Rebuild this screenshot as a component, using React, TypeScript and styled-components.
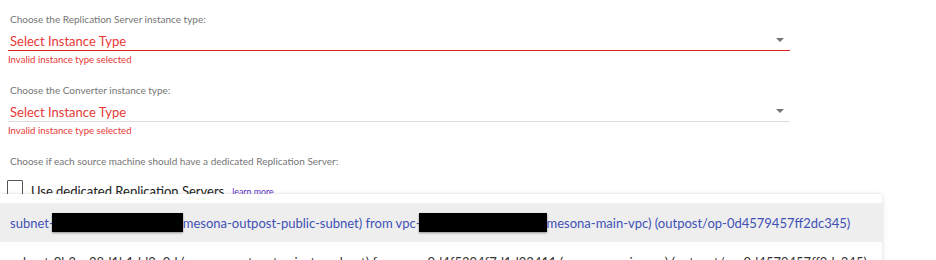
import React from 'react';
import styled, { createGlobalStyle } from 'styled-components';

const GlobalStyle = createGlobalStyle`
  html, body {
    margin: 0;
    padding: 0;
    overflow: hidden;
    background: #ffffff;
    font-family: Lato, 'Open Sans', sans-serif;
  }
`;

type Option = { subnet: string; name: string; vpc: string; outpost: string; redacted?: boolean };

const options: Option[] = [
  { subnet: '', name: 'mesona-outpost-public-subnet', vpc: '', outpost: 'op-0d4579457ff2dc345', redacted: true },
  { subnet: '0b2ce28d1b1dd2e0d', name: 'mesona-outpost-private-subnet', vpc: '0d4f5304f7d1d23411', outpost: 'op-0d4579457ff2dc345' },
  { subnet: '07a1c9e3b52d4f6a8', name: 'mesona-outpost-app-subnet', vpc: '0d4f5304f7d1d23411', outpost: 'op-0d4579457ff2dc345' },
  { subnet: '0e93b7a2c4d18f057', name: 'mesona-outpost-db-subnet', vpc: '0d4f5304f7d1d23411', outpost: 'op-0d4579457ff2dc345' },
  { subnet: '0f5d2b8a93c7e1046', name: 'mesona-outpost-mgmt-subnet', vpc: '0d4f5304f7d1d23411', outpost: 'op-0d4579457ff2dc345' },
];

export default function App() {
  return (
    <Page>
      <GlobalStyle />
      <Form>
        <Field>
          <Label>Choose the Replication Server instance type:</Label>
          <SelectBox $error>
            <SelectValue>Select Instance Type</SelectValue>
            <Arrow />
          </SelectBox>
          <ErrorText>Invalid instance type selected</ErrorText>
        </Field>
        <Field>
          <Label>Choose the Converter instance type:</Label>
          <SelectBox>
            <SelectValue>Select Instance Type</SelectValue>
            <Arrow />
          </SelectBox>
          <ErrorText>Invalid instance type selected</ErrorText>
        </Field>
        <Label>Choose if each source machine should have a dedicated Replication Server:</Label>
        <CheckRow>
          <CheckBox />
          <CheckText>Use dedicated Replication Servers</CheckText>
          <LearnMore>learn more</LearnMore>
        </CheckRow>
      </Form>

      <Menu>
        {options.map((o, i) =>
          o.redacted ? (
            <MenuItem key={i} $active={i === 0}>
              subnet-<Redact $w={131} />
              {o.name}) from vpc-<Redact $w={128} />
              mesona-main-vpc) (outpost/{o.outpost})
            </MenuItem>
          ) : (
            <MenuItem key={i}>
              subnet-{o.subnet} ({o.name}) from vpc-{o.vpc} (mesona-main-vpc) (outpost/{o.outpost})
            </MenuItem>
          )
        )}
      </Menu>
    </Page>
  );
}

const Page = styled.div`
  position: relative;
  width: 936px;
  height: 260px;
  overflow: hidden;
`;

const Form = styled.div`
  width: 782px;
  padding: 12px 0 0 8px;
`;

const Field = styled.div`
  margin-bottom: 17px;
`;

const Label = styled.div`
  font-size: 10px;
  line-height: 14px;
  color: #757575;
  padding-left: 2px;
`;

const SelectBox = styled.div<{ $error?: boolean }>`
  display: flex;
  align-items: center;
  justify-content: space-between;
  padding: 6px 6px 0 2px;
  border-bottom: 1px solid ${(p) => (p.$error ? '#e02020' : '#dedede')};
`;

const SelectValue = styled.span`
  font-size: 13px;
  line-height: 18px;
  color: #e53935;
`;

const Arrow = styled.span`
  width: 0;
  height: 0;
  border-left: 4px solid transparent;
  border-right: 4px solid transparent;
  border-top: 4px solid #757575;
  margin-bottom: 3px;
`;

const ErrorText = styled.div`
  margin-top: 3px;
  font-size: 9.6px;
  line-height: 12px;
  color: #e53935;
`;

const CheckRow = styled.div`
  display: flex;
  align-items: flex-end;
  margin-top: 12px;
  margin-left: -1px;
`;

const CheckBox = styled.span`
  width: 14px;
  height: 14px;
  border: 1.5px solid #555555;
  border-radius: 1px;
  flex-shrink: 0;
  margin-bottom: 1px;
`;

const CheckText = styled.span`
  font-size: 13px;
  line-height: 18px;
  color: #222222;
  margin-left: 8px;
  margin-bottom: -3px;
`;

const LearnMore = styled.span`
  font-size: 8.8px;
  line-height: 12px;
  color: #5b2fc9;
  margin-left: 8px;
  margin-bottom: -1px;
`;

const Menu = styled.div`
  position: absolute;
  left: 0;
  top: 194px;
  width: 882px;
  height: 200px;
  padding-top: 9px;
  box-sizing: border-box;
  background: #ffffff;
  box-shadow: 0 -1px 2px rgba(0, 0, 0, 0.06), 0 2px 6px rgba(0, 0, 0, 0.12);
  overflow-y: scroll;

  &::-webkit-scrollbar {
    width: 7px;
  }
  &::-webkit-scrollbar-track {
    background: transparent;
  }
  &::-webkit-scrollbar-thumb {
    background: #d8d8d8;
    border-radius: 3px;
  }
`;

const MenuItem = styled.div<{ $active?: boolean }>`
  height: 39px;
  display: flex;
  align-items: center;
  padding-left: 10px;
  white-space: nowrap;
  font-size: 13px;
  color: ${(p) => (p.$active ? '#3f51b5' : '#333333')};
  background: ${(p) => (p.$active ? '#eeeeee' : 'transparent')};
`;

const Redact = styled.span<{ $w: number }>`
  display: inline-block;
  width: ${(p) => p.$w}px;
  height: 19px;
  background: #000000;
  box-shadow: 0 1px 2px rgba(0, 0, 0, 0.4);
  margin-left: -2px;
`;
